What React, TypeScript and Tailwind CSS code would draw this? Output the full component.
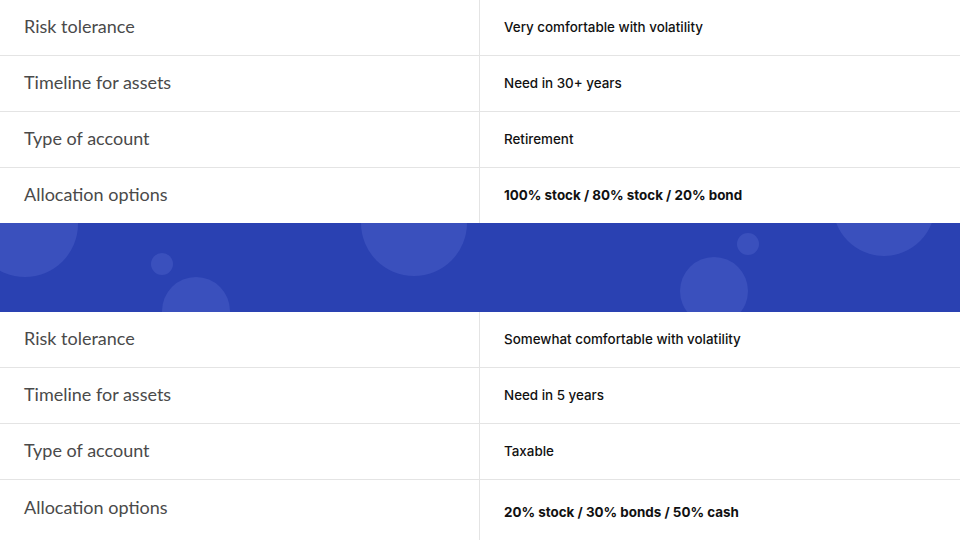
import React from 'react';

type Row = { label: string; value: string; strong?: boolean };

const top: Row[] = [
  { label: 'Risk tolerance', value: 'Very comfortable with volatility' },
  { label: 'Timeline for assets', value: 'Need in 30+ years' },
  { label: 'Type of account', value: 'Retirement' },
  { label: 'Allocation options', value: '100% stock / 80% stock / 20% bond', strong: true },
];

const bottom: Row[] = [
  { label: 'Risk tolerance', value: 'Somewhat comfortable with volatility' },
  { label: 'Timeline for assets', value: 'Need in 5 years' },
  { label: 'Type of account', value: 'Taxable' },
  { label: 'Allocation options', value: '20% stock / 30% bonds / 50% cash', strong: true },
];

const ProfileTable = ({ rows, tall }: { rows: Row[]; tall?: boolean }) => (
  <div className="flex flex-col">
    {rows.map((row, i) => {
      const last = i === rows.length - 1;
      return (
        <div
          key={row.label}
          className={`grid grid-cols-2 ${last ? (tall ? 'h-[60px]' : 'h-[55px]') : 'h-14 border-b border-[#e4e4e4]'}`}
        >
          <div className={`flex items-center pl-6 pb-0.5 border-r border-[#e4e4e4] text-[18px] text-[#4a4a4a] ${last && tall ? 'pb-1.5' : ''}`}>
            {row.label}
          </div>
          <div
            className={`flex items-center pl-6 font-['Inter',sans-serif] text-[13.4px] text-[#111] ${row.strong ? 'font-bold' : 'font-medium'} ${last && tall ? 'pt-1' : ''}`}
          >
            {row.value}
          </div>
        </div>
      );
    })}
  </div>
);

// decorative bubbles on the divider band
const bubbles = [
  { cx: 25, cy: 1, r: 53 },
  { cx: 162, cy: 41, r: 11 },
  { cx: 196, cy: 88, r: 34 },
  { cx: 414, cy: 0, r: 53 },
  { cx: 748, cy: 21, r: 11 },
  { cx: 714, cy: 68, r: 34 },
  { cx: 884, cy: -18, r: 51 },
];

const Band = () => (
  <div className="h-[89px] bg-[#2a41b2] overflow-hidden">
    <svg width="960" height="89" viewBox="0 0 960 89" className="block">
      {bubbles.map((b, i) => (
        <circle key={i} cx={b.cx} cy={b.cy} r={b.r} fill="#3a50bd" />
      ))}
    </svg>
  </div>
);

export default function App() {
  return (
    <div className="w-[960px] h-[540px] overflow-hidden bg-white font-['Lato',sans-serif]">
      <ProfileTable rows={top} />
      <Band />
      <ProfileTable rows={bottom} tall />
    </div>
  );
}
